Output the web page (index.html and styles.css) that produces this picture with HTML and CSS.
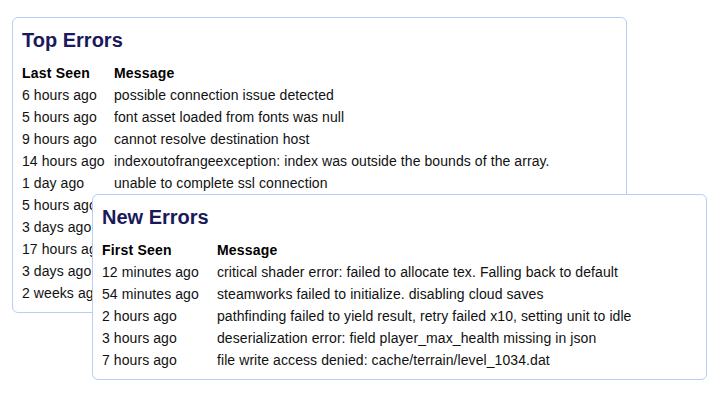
FILE: index.html
```html
<!DOCTYPE html>
<html>
<head>
<meta charset="utf-8">
<link rel="stylesheet" href="styles.css">
</head>
<body>
<div class="stack">
  <section class="card card-top">
    <h2 class="card-title">Top Errors</h2>
    <table class="errors errors-top">
      <thead>
        <tr><th class="col-time">Last Seen</th><th>Message</th></tr>
      </thead>
      <tbody>
        <tr><td>6 hours ago</td><td>possible connection issue detected</td></tr>
        <tr><td>5 hours ago</td><td>font asset loaded from fonts was null</td></tr>
        <tr><td>9 hours ago</td><td>cannot resolve destination host</td></tr>
        <tr><td>14 hours ago</td><td>indexoutofrangeexception: index was outside the bounds of the array.</td></tr>
        <tr><td>1 day ago</td><td>unable to complete ssl connection</td></tr>
        <tr><td>5 hours ago</td><td>texture streaming budget exceeded</td></tr>
        <tr><td>3 days ago</td><td>audio device lost, reinitializing</td></tr>
        <tr><td>17 hours ago</td><td>shader compilation timed out</td></tr>
        <tr><td>3 days ago</td><td>save file checksum mismatch</td></tr>
        <tr><td>2 weeks ago</td><td>network session expired</td></tr>
      </tbody>
    </table>
  </section>
  <section class="card card-new">
    <h2 class="card-title">New Errors</h2>
    <table class="errors errors-new">
      <thead>
        <tr><th class="col-time">First Seen</th><th>Message</th></tr>
      </thead>
      <tbody>
        <tr><td>12 minutes ago</td><td>critical shader error: failed to allocate tex. Falling back to default</td></tr>
        <tr><td>54 minutes ago</td><td>steamworks failed to initialize. disabling cloud saves</td></tr>
        <tr><td>2 hours ago</td><td>pathfinding failed to yield result, retry failed x10, setting unit to idle</td></tr>
        <tr><td>3 hours ago</td><td>deserialization error: field player_max_health missing in json</td></tr>
        <tr><td>7 hours ago</td><td>file write access denied: cache/terrain/level_1034.dat</td></tr>
      </tbody>
    </table>
  </section>
</div>
</body>
</html>
```
FILE: styles.css
```css
html, body {
  margin: 0;
  background: #ffffff;
}
body {
  padding: 17px 12px;
  font-family: "Liberation Sans", Arial, sans-serif;
  color: #000000;
}
.stack {
  display: grid;
  grid-template-columns: auto;
  justify-content: start;
  align-items: start;
}
.card {
  grid-area: 1 / 1;
  width: 615px;
  box-sizing: border-box;
  background: #ffffff;
  border: 1px solid #b9cdf6;
  border-radius: 6px;
  padding: 10px 9px 8px 9px;
}
.card-new {
  margin-left: 80px;
  margin-top: 177px;
}
.card-title {
  margin: 0 0 10px 0;
  font-size: 20px;
  line-height: 24px;
  font-weight: bold;
  color: #1a1a5a;
}
.errors {
  border-collapse: collapse;
  font-size: 14px;
  line-height: 22px;
  letter-spacing: 0.08px;
  color: #111111;
}
.errors th, .errors td {
  padding: 0;
  text-align: left;
  white-space: nowrap;
}
.errors th {
  font-weight: bold;
  letter-spacing: 0.2px;
  color: #000000;
}
.errors-top .col-time {
  width: 92px;
}
.errors-new .col-time {
  width: 115px;
}
```
